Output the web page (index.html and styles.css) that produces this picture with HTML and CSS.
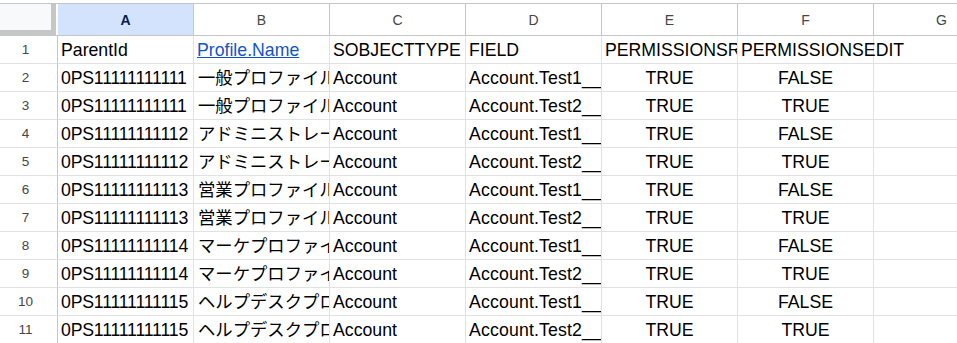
FILE: index.html
```html
<!DOCTYPE html>
<html lang="ja">
<head>
<meta charset="utf-8">
<title>Sheet</title>
<link rel="stylesheet" href="styles.css">
</head>
<body>
<div class="sheet">
  <div class="corner"></div>
  <div class="colhead selected">A</div>
  <div class="colhead">B</div>
  <div class="colhead">C</div>
  <div class="colhead">D</div>
  <div class="colhead">E</div>
  <div class="colhead">F</div>
  <div class="colhead">G</div>

  <div class="rowhead">1</div>
  <div class="cell">ParentId</div>
  <div class="cell"><span class="link">Profile.Name</span></div>
  <div class="cell">SOBJECTTYPE</div>
  <div class="cell">FIELD</div>
  <div class="cell">PERMISSIONSREAD</div>
  <div class="cell spill">PERMISSIONSEDIT</div>
  <div class="cell"></div>

  <div class="rowhead">2</div>
  <div class="cell id">0PS11111111111</div>
  <div class="cell jp">一般プロファイル</div>
  <div class="cell">Account</div>
  <div class="cell field">Account.Test1__c</div>
  <div class="cell bool">TRUE</div>
  <div class="cell bool">FALSE</div>
  <div class="cell"></div>

  <div class="rowhead">3</div>
  <div class="cell id">0PS11111111111</div>
  <div class="cell jp">一般プロファイル</div>
  <div class="cell">Account</div>
  <div class="cell field">Account.Test2__c</div>
  <div class="cell bool">TRUE</div>
  <div class="cell bool">TRUE</div>
  <div class="cell"></div>

  <div class="rowhead">4</div>
  <div class="cell id">0PS11111111112</div>
  <div class="cell jp">アドミニストレーター</div>
  <div class="cell">Account</div>
  <div class="cell field">Account.Test1__c</div>
  <div class="cell bool">TRUE</div>
  <div class="cell bool">FALSE</div>
  <div class="cell"></div>

  <div class="rowhead">5</div>
  <div class="cell id">0PS11111111112</div>
  <div class="cell jp">アドミニストレーター</div>
  <div class="cell">Account</div>
  <div class="cell field">Account.Test2__c</div>
  <div class="cell bool">TRUE</div>
  <div class="cell bool">TRUE</div>
  <div class="cell"></div>

  <div class="rowhead">6</div>
  <div class="cell id">0PS11111111113</div>
  <div class="cell jp">営業プロファイル</div>
  <div class="cell">Account</div>
  <div class="cell field">Account.Test1__c</div>
  <div class="cell bool">TRUE</div>
  <div class="cell bool">FALSE</div>
  <div class="cell"></div>

  <div class="rowhead">7</div>
  <div class="cell id">0PS11111111113</div>
  <div class="cell jp">営業プロファイル</div>
  <div class="cell">Account</div>
  <div class="cell field">Account.Test2__c</div>
  <div class="cell bool">TRUE</div>
  <div class="cell bool">TRUE</div>
  <div class="cell"></div>

  <div class="rowhead">8</div>
  <div class="cell id">0PS11111111114</div>
  <div class="cell jp">マーケプロファイル</div>
  <div class="cell">Account</div>
  <div class="cell field">Account.Test1__c</div>
  <div class="cell bool">TRUE</div>
  <div class="cell bool">FALSE</div>
  <div class="cell"></div>

  <div class="rowhead">9</div>
  <div class="cell id">0PS11111111114</div>
  <div class="cell jp">マーケプロファイル</div>
  <div class="cell">Account</div>
  <div class="cell field">Account.Test2__c</div>
  <div class="cell bool">TRUE</div>
  <div class="cell bool">TRUE</div>
  <div class="cell"></div>

  <div class="rowhead">10</div>
  <div class="cell id">0PS11111111115</div>
  <div class="cell jp">ヘルプデスクプロファイル</div>
  <div class="cell">Account</div>
  <div class="cell field">Account.Test1__c</div>
  <div class="cell bool">TRUE</div>
  <div class="cell bool">FALSE</div>
  <div class="cell"></div>

  <div class="rowhead">11</div>
  <div class="cell id">0PS11111111115</div>
  <div class="cell jp">ヘルプデスクプロファイル</div>
  <div class="cell">Account</div>
  <div class="cell field">Account.Test2__c</div>
  <div class="cell bool">TRUE</div>
  <div class="cell bool">TRUE</div>
  <div class="cell"></div>
</div>
</body>
</html>
```
FILE: styles.css
```css
html, body {
  margin: 0;
  padding: 0;
  background: #ffffff;
  overflow: hidden;
}

.sheet {
  display: grid;
  grid-template-columns: 58px repeat(7, 136px);
  grid-template-rows: 33px repeat(11, 28px);
  margin-top: 3px;
  width: max-content;
  font-family: "Liberation Sans", Arial, "Noto Sans CJK JP", sans-serif;
}

.corner {
  box-sizing: border-box;
  background: #f8f9fa;
  border-top: 1px solid #c4c7c5;
  border-bottom: 1px solid #c4c7c5;
  box-shadow: inset -2px 0 0 #ffffff, inset -7px -5px 0 #c4c7c5;
}

.colhead {
  box-sizing: border-box;
  border-top: 1px solid #c4c7c5;
  border-right: 1px solid #c4c7c5;
  border-bottom: 1px solid #c4c7c5;
  display: flex;
  align-items: center;
  justify-content: center;
  font-size: 14px;
  color: #444746;
  background: #ffffff;
}

.colhead.selected {
  background: #d3e3fd;
  color: #041e49;
  font-weight: bold;
}

.rowhead {
  box-sizing: border-box;
  border-right: 1px solid #c4c7c5;
  border-bottom: 1px solid #e1e3e1;
  padding-right: 6px;
  display: flex;
  align-items: center;
  justify-content: center;
  font-size: 13.5px;
  color: #444746;
  background: #ffffff;
}

.cell {
  box-sizing: border-box;
  border-right: 1px solid #e1e3e1;
  border-bottom: 1px solid #e1e3e1;
  padding: 1px 0 0 3px;
  font-size: 17.7px;
  line-height: 26px;
  color: #000000;
  white-space: nowrap;
  overflow: hidden;
}

.cell.spill {
  overflow: visible;
}

.cell.id {
  letter-spacing: -0.2px;
}

.cell.field {
  letter-spacing: 0.15px;
}

.cell.jp {
  font-family: "Liberation Sans", "Noto Sans CJK JP", sans-serif;
  font-size: 17.33px;
  padding-left: 4px;
}

.cell.bool {
  text-align: center;
  padding-left: 0;
}

.link {
  color: #1155cc;
  text-decoration: underline;
}
```
